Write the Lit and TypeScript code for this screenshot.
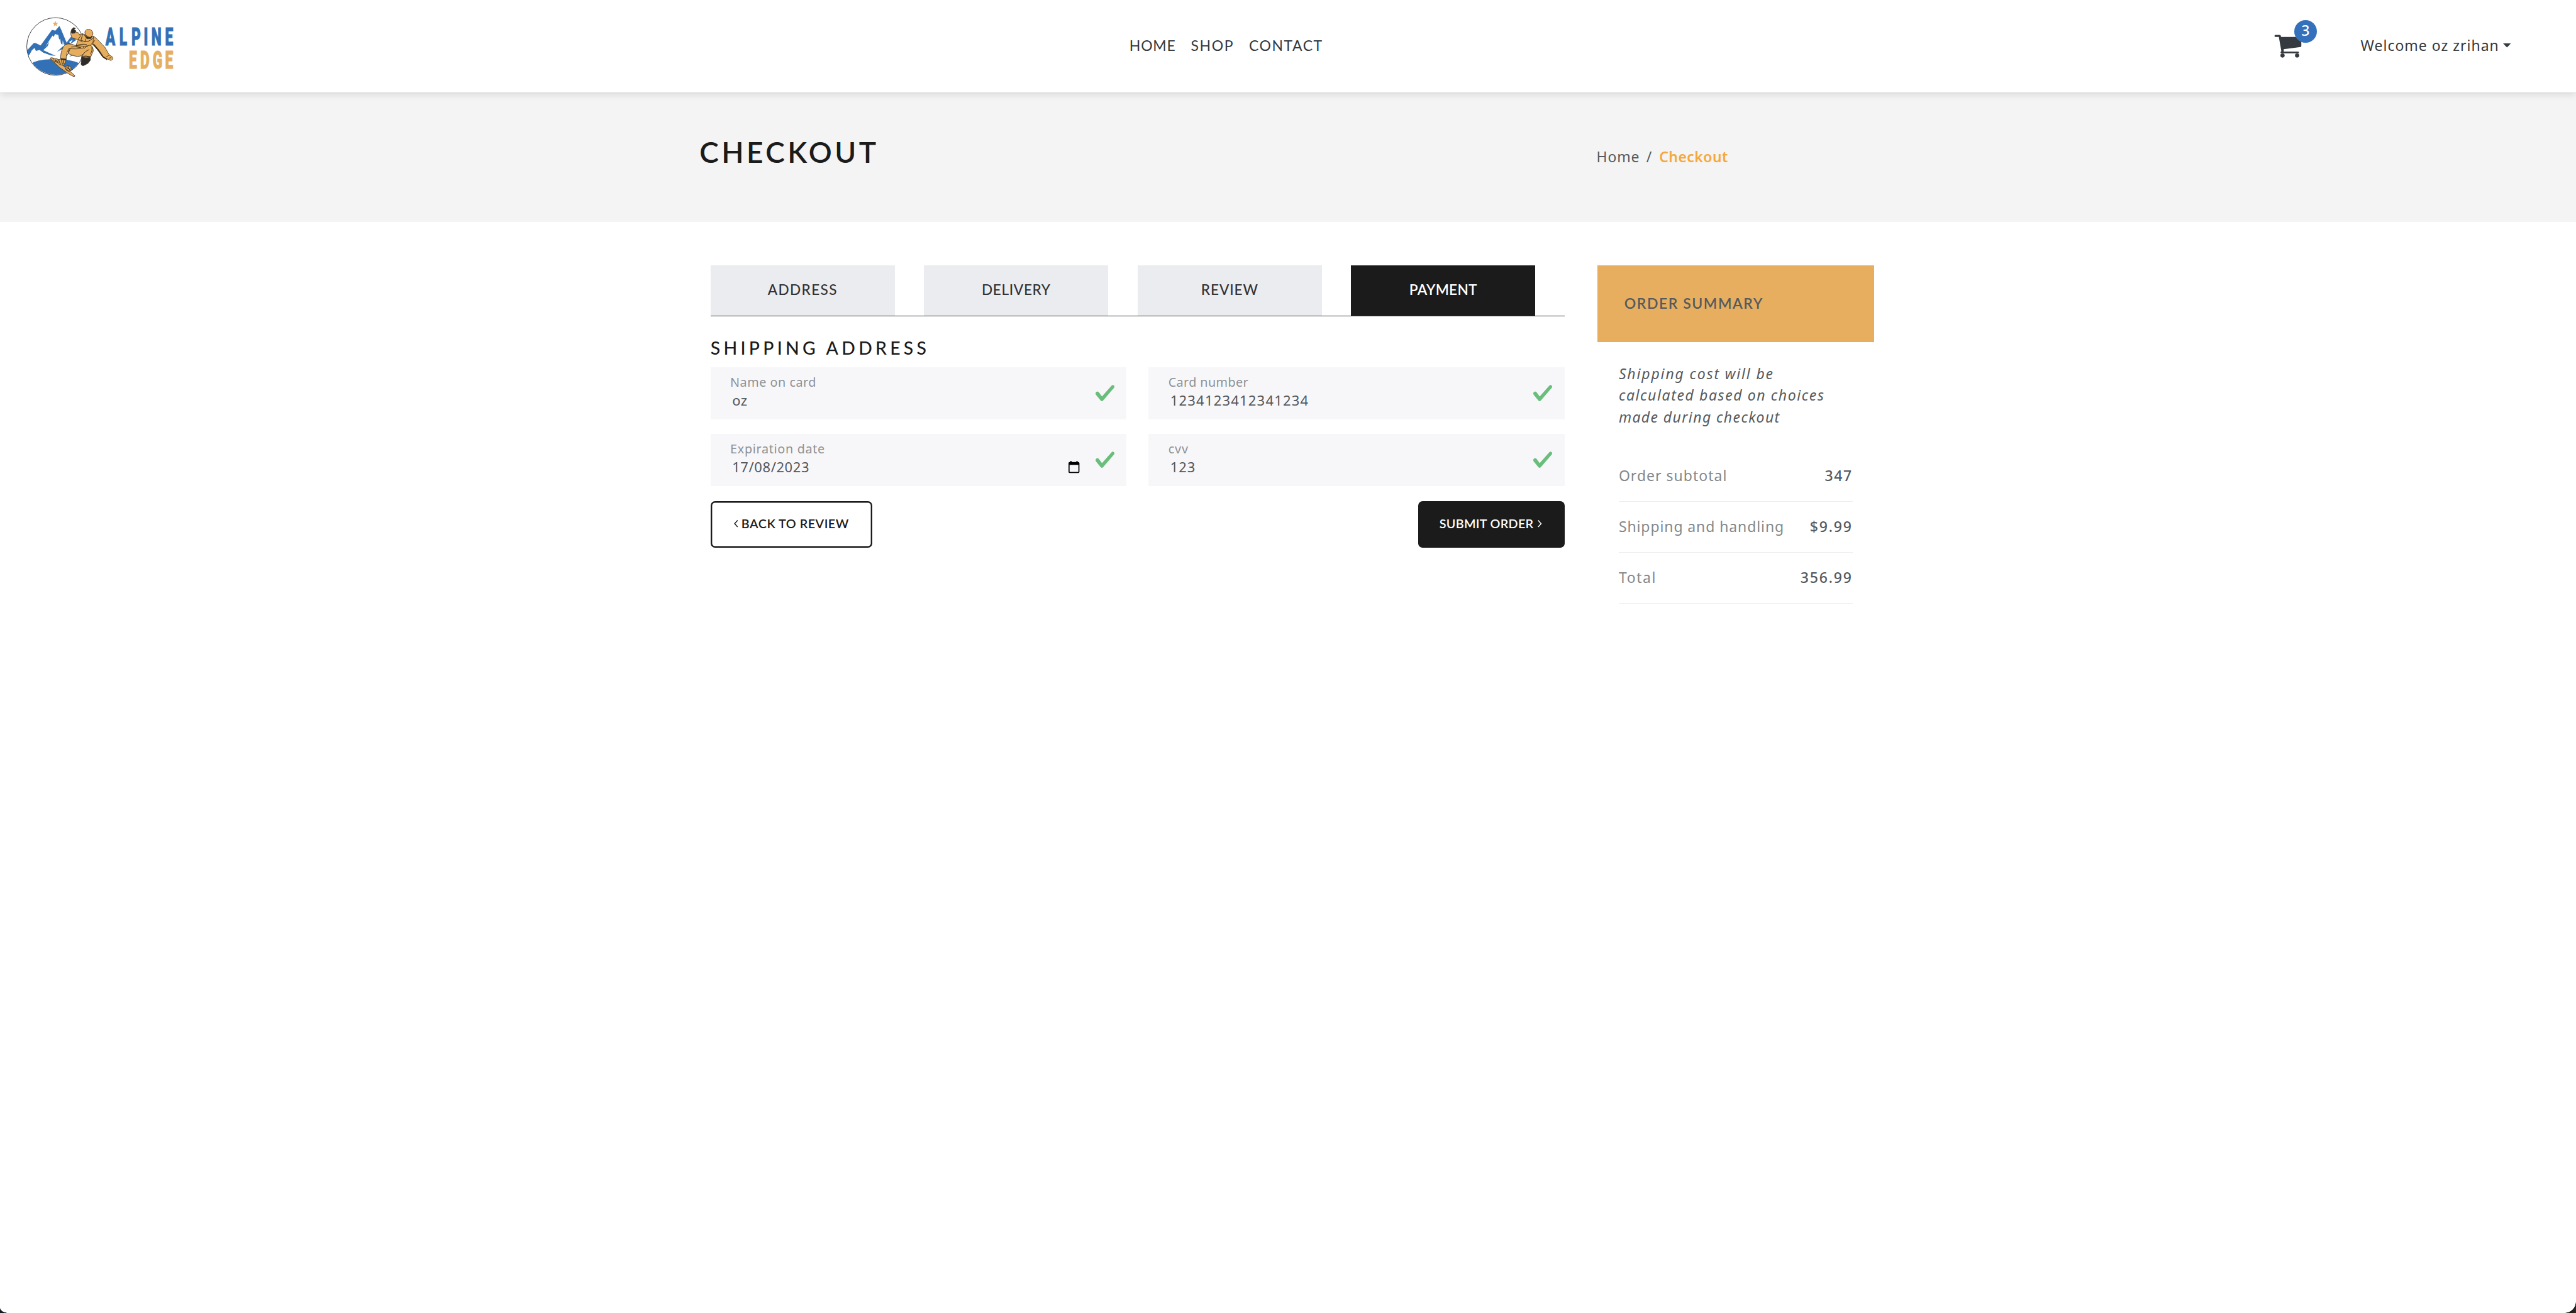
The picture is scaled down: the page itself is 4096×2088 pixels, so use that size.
import { LitElement, html, css } from "lit";
import { customElement, property } from "lit/decorators.js";

const base = css`
  * { box-sizing: border-box; }
  svg { display: block; flex: none; overflow: visible; }
`;

@customElement("brand-logo")
class BrandLogo extends LitElement {
  static styles = [base, css`
    :host { display: block; width: 237.5px; height: 100.1px; }
    .art { width: 237.5px; height: 100.1px; }
    .word { font-family: Roboto, "Liberation Sans Narrow", sans-serif; font-weight: 900; font-size: 147px; stroke-width: 4; }
    .blue { fill: #3371b7; stroke: #3371b7; }
    .gold { fill: #e6ae5f; stroke: #e6ae5f; }
  `];

  render() {
    return html`<svg class="art" viewBox="150 90 890 375">
      <g transform="translate(150 90)">
        <path fill="#3371b7" d="M43 285 C90 256 255 254 319 286 A171 171 0 0 1 43 285Z"/>
        <path fill="#3371b7" d="M12 210 L50 168 Q58 163 67 169 L92 181 L153 97 L159 88 L180 93 L204 65 L214 85 L247 164 L272 130 L290 128 L303 150 L262 178 L246 196 L240 176 L231 176 L224 150 L222 176 L214 170 L208 140 L203 146 L197 118 L188 116 L178 112 L170 130 L163 122 L120 188 L143 160 L135 184 L108 209 L140 224 L183 244 L152 240 L108 224 L86 208 L64 214 L56 196 L40 210 L27 234 L18 240 Z"/>
        <path fill="#3371b7" d="M190 218 L222 188 L252 176 L232 198 Z"/>
        <path fill="#fff" d="M262 160 L284 146 L270 170 Z"/>
        <path fill="#3f8795" d="M262 248 L286 230 L300 236 Z"/>
        <path fill="#e6ae5f" d="M180 34 L184.500 46 L197 46.500 L187 54.500 L190.500 67 L180 60 L169.500 67 L173 54.500 L163 46.500 L175.500 46 Z"/>
        <circle cx="181" cy="187" r="171.500" fill="none" stroke="#36373b" stroke-width="3.600"/>
        <g fill="#e5ad5d" stroke="#3a2d1c" stroke-width="3" stroke-linejoin="round" stroke-linecap="round">
          <path d="M149 256 Q156 251 167 256 L214 291 L256 326 L296 360 Q298 368 288 366 L262 352 L205 312 L162 271 Z"/>
          <path d="M166 259 L190 259 L200 271 L214 258 L245 264 L238 284 L228 301 L205 293 L192 282 L176 277 Z"/>
          <path d="M186 268 L196 283 M200 270 L210 290 M216 266 L222 293 M178 264 L184 277 M230 270 L226 290" stroke-width="4"/>
          <path d="M238 307 Q262 296 273 311 Q277 324 264 338 L246 329 Z"/>
          <path d="M248 312 L262 322 M256 306 L266 330 M240 318 L258 332" stroke-width="4"/>
          <path d="M215 255 L245 260 L242 269 L214 264 Z" fill="#2e2b29"/>
          <path d="M262 199 L350 182 C392 168 405 185 406 214 L392 246 L384 258 L338 252 L346 232 C330 252 300 250 259 230 C255 220 257 207 262 199Z"/>
          <path d="M304 184 C282 170 246 168 236 179 C221 192 211 228 211 258 L244 262 C245 238 250 214 262 199 C290 203 322 202 346 196 L352 180 Z"/>
          <path d="M303 180 L317 146 L310 120 L340 112 L405 128 L419 150 L412 174 L356 186 Z"/>
          <path d="M273 101 L300 100 L318 106 L330 126 L313 146 L284 137 C272 126 270 112 273 101Z"/>
          <path d="M274 99 L276 86 L289 74 L300 79 L290 84 L303 94 L296 107 L280 109 Z" fill="#2e2b29"/>
          <path d="M408 126 C428 138 455 172 474 190 L502 238 L520 249 C528 259 520 269 508 270 L492 261 L486 266 L462 250 C440 220 425 195 405 178 Z"/>
          <path d="M409 176 Q440 208 464 248 L486 262" fill="none" stroke-width="7"/>
          <path d="M484 248 L502 238 M500 256 L512 254" fill="none"/>
          <path d="M356 106 C354 90 368 84 380 85 C398 86 406 101 403 116 L396 130 L382 134 L362 120 Z"/>
          <path d="M353 118 Q368 134 390 133 L398 124 L392 140 L368 140 Z" fill="#2e2b29"/>
          <path d="M344 110 L332 150 L356 158 L362 142 M356 158 Q380 162 404 136 M318 146 L340 160 M304 182 Q340 168 366 176 M414 152 L396 172 M268 200 Q256 232 248 242 M276 190 Q300 186 332 194 M346 232 Q358 214 380 206 M350 200 Q356 190 372 186 M398 190 Q402 214 390 232 M336 246 Q362 240 388 248" fill="none" stroke-width="3.600"/>
          <path d="M337 250 L360 256 L388 252 L389 268 L374 288 L346 302 Q330 300 334 284 Z" fill="#2e2b29"/>
          <path d="M342 244 L364 250 L388 246" fill="none"/>
        </g>
      </g>
      <text class="word blue" transform="scale(.58 1)" y="270" x="1084 1227 1350 1477 1556 1697">ALPINE</text>
      <text class="word gold" transform="scale(.58 1)" y="408" x="1325 1441 1568 1697">EDGE</text>
    </svg>`;
  }
}

@customElement("site-header")
class SiteHeader extends LitElement {
  static styles = [base, css`
    :host { display: block; position: relative; z-index: 1; }
    .bar { display: flex; align-items: flex-start; height: 147px; padding: 0 104px 0 40px; background: #fff; color: #343a40; font-size: 23px; line-height: 28px; white-space: nowrap; box-shadow: 0 0 1px rgba(0,0,0,.2), 0 3px 12px rgba(0,0,0,.12); }
    brand-logo { margin-top: 24px; }
    .nav { display: grid; grid-template-columns: 97.6px 92.7px auto; margin: 58px 0 0 1518.3px; }
    .home { letter-spacing: .8px; }
    .shop { letter-spacing: 1.6px; }
    .contact { letter-spacing: 1.5px; }
    .right { display: flex; margin-left: auto; }
    .cart { position: relative; width: 137.400px; padding-top: 54.700px; }
    .icon { width: 43.800px; height: 36.800px; }
    .badge { position: absolute; left: 31.500px; top: 32px; width: 36px; height: 36px; border-radius: 50%; background: #3371bd; color: #fff; font-family: "Noto Sans", sans-serif; font-weight: 500; text-align: center; line-height: 33px; }
    .user { width: 225.900px; padding-top: 58px; font-family: "Noto Sans", sans-serif; letter-spacing: .99px; }
    .caret { width: 12.500px; height: 6.600px; margin-top: 69px; }
  `];

  render() {
    return html`<header class="bar">
      <brand-logo></brand-logo>
      <nav class="nav"><span class="home">HOME</span><span class="shop">SHOP</span><span class="contact">CONTACT</span></nav>
      <div class="right">
        <div class="cart">
          <svg class="icon" viewBox="50 115 164 138" fill="#343a40">
            <path d="M58 117 H84 Q89 117 90 123 L91 129 H212 V184 Q212 188 208 189 L107 202 V216 H192 Q198 216 198 221.500 T192 227 H94 Q88 227 88 221 Q88 216 93 214 L78 129 H58 Q52 129 52 123 T58 117Z"/>
            <circle cx="100" cy="240" r="12.500"/><circle cx="187" cy="240" r="12.500"/>
          </svg>
          <span class="badge">3</span>
        </div>
        <span class="user">Welcome oz zrihan</span>
        <svg class="caret" viewBox="0 0 12.500 6.600"><path fill="#343a40" d="M0 0H12.500L6.250 6.600Z"/></svg>
      </div>
    </header>`;
  }
}

@customElement("page-hero")
class PageHero extends LitElement {
  static styles = [base, css`
    :host { display: block; }
    .hero { display: grid; grid-template-columns: 1426.300px auto; height: 206px; padding: 66.600px 0 0 1112.300px; background: #f4f4f4; white-space: nowrap; }
    .title { margin: 0; font-size: 46px; line-height: 56px; font-weight: 600; letter-spacing: 4.42px; color: #1b1b1b; }
    .crumbs { display: grid; grid-template-columns: 79.200px 20.400px auto; align-content: start; padding-top: 21.300px; font-family: "Noto Sans", sans-serif; font-size: 23px; line-height: 28px; color: #555a5e; }
    .home { letter-spacing: .85px; }
    .here { color: #f5a83c; font-weight: 600; letter-spacing: .44px; }
  `];

  render() {
    return html`<section class="hero">
      <h1 class="title">CHECKOUT</h1>
      <div class="crumbs"><span class="home">Home</span><span>/</span><span class="here">Checkout</span></div>
    </section>`;
  }
}

@customElement("form-field")
class FormField extends LitElement {
  @property() label = "";
  @property() value = "";
  @property() kind = "name";

  static styles = [base, css`
    :host { display: block; }
    .field { display: flex; align-items: flex-start; height: 83.200px; padding: 0 18.800px 0 31.400px; background: #f7f7f9; white-space: nowrap; }
    .texts { flex: 1; padding-top: 11.600px; font-family: "Noto Sans", sans-serif; }
    .label { font-size: 19.800px; line-height: 24px; color: #8e9194; }
    .value { margin: 2.300px 0 0 3.100px; font-size: 22px; line-height: 28px; color: #55585b; }
    .name .label { letter-spacing: .51px; }
    .name .value { letter-spacing: .4px; }
    .number .label { letter-spacing: .4px; }
    .number .value { letter-spacing: 1.2px; }
    .date .label { letter-spacing: .67px; }
    .date .value { letter-spacing: .59px; }
    .code .label { letter-spacing: .88px; }
    .code .value { letter-spacing: .97px; }
    .calendar { width: 17.400px; height: 19.300px; margin: 42.500px 25.300px 0 0; }
    .check { width: 30.300px; height: 26px; margin-top: 27.800px; }
  `];

  render() {
    return html`<div class="field ${this.kind}">
      <div class="texts"><div class="label">${this.label}</div><div class="value">${this.value}</div></div>
      ${this.kind === "date" ? html`<svg class="calendar" viewBox="0 0 17.400 19.300"><path fill="#000" fill-rule="evenodd" d="M3 0H4.800V1.800H12.600V0H14.400V1.800H15.600Q17.400 1.800 17.400 3.600V17.500Q17.400 19.300 15.600 19.300H1.800Q0 19.300 0 17.500V3.600Q0 1.800 1.800 1.800H3ZM1.700 6.200V17.500H15.700V6.200Z"/></svg>` : ""}
      <svg class="check" viewBox="0 0 30.300 26"><path fill="#69be7b" d="M2.500 10.800C0 11.400 -.6 14 .8 16L8 24.700C9.500 26.400 11 26.400 12.400 24.600L29.600 4.600C31.200 2 28 -.9 25.700 .9L10.200 18.600L5.600 12.200C4.900 11 3.900 10.500 2.500 10.800Z"/></svg>
    </div>`;
  }
}

@customElement("checkout-form")
class CheckoutForm extends LitElement {
  static styles = [base, css`
    :host { display: block; width: 1358px; }
    .tabs { display: grid; grid-template-columns: repeat(4, 339.500px); border-bottom: 1px solid #333; }
    .tab { display: flex; align-items: center; justify-content: center; width: 293.300px; height: 80.700px; padding-bottom: 3px; background: #ebecf0; color: #333; font-size: 22.600px; font-weight: 500; }
    .tab.active { background: #1b1b1b; color: #fff; font-weight: 600; }
    .address { letter-spacing: 1.34px; }
    .delivery { letter-spacing: .67px; }
    .review { letter-spacing: .9px; }
    .payment { letter-spacing: .3px; }
    .heading { margin: 32.300px 0 14.200px; font-size: 28.400px; line-height: 34px; font-weight: 500; letter-spacing: 5.29px; color: #1b1b1b; white-space: nowrap; }
    .fields { display: grid; grid-template-columns: 661.300px 661.300px; gap: 23.100px 35.300px; }
    .actions { display: flex; justify-content: space-between; margin-top: 23.100px; }
    .btn { display: flex; align-items: center; height: 74.800px; border-radius: 7px; font-size: 19.800px; font-weight: 600; line-height: 24px; white-space: nowrap; color: #1b1b1b; }
    .btn span { padding-bottom: 4px; }
    .back { width: 257.800px; padding-left: 37.700px; gap: 4.900px; box-shadow: inset 0 0 0 2.400px #1b1b1b; letter-spacing: .5px; }
    .submit { width: 233px; padding-left: 34px; gap: 6.200px; background: #1b1b1b; color: #fff; letter-spacing: .3px; }
    .chev { width: 6.600px; height: 11.400px; margin-bottom: 1.500px; }
  `];

  render() {
    const tabs = ["ADDRESS", "DELIVERY", "REVIEW", "PAYMENT"];
    return html`
      <div class="tabs">${tabs.map(t => html`<div class="tab ${t.toLowerCase()} ${t === "PAYMENT" ? "active" : ""}">${t}</div>`)}</div>
      <h2 class="heading">SHIPPING ADDRESS</h2>
      <div class="fields">
        <form-field kind="name" label="Name on card" value="oz"></form-field>
        <form-field kind="number" label="Card number" value="1234123412341234"></form-field>
        <form-field kind="date" label="Expiration date" value="17/08/2023"></form-field>
        <form-field kind="code" label="cvv" value="123"></form-field>
      </div>
      <div class="actions">
        <div class="btn back"><svg class="chev" viewBox="0 0 6.600 11.400"><path fill="none" stroke="currentColor" stroke-width="1.500" d="M5.800 .5L1.200 5.700L5.800 10.900"/></svg><span>BACK TO REVIEW</span></div>
        <div class="btn submit"><span>SUBMIT ORDER</span><svg class="chev" viewBox="0 0 6.600 11.400"><path fill="none" stroke="currentColor" stroke-width="1.500" d="M.8 .5L5.400 5.700L.8 10.900"/></svg></div>
      </div>`;
  }
}

@customElement("order-summary")
class OrderSummary extends LitElement {
  static styles = [base, css`
    :host { display: block; width: 440.400px; font-size: 23px; line-height: 28px; color: #555a5e; white-space: nowrap; }
    .head { height: 122.500px; padding: 46px 0 0 43.200px; background: #e7ae60; font-weight: 600; letter-spacing: 1.54px; }
    .body { padding: 32.500px 34.300px 0 34.300px; font-family: "Noto Sans", sans-serif; }
    .note { margin: 0 0 36px; font-style: italic; line-height: 34.650px; }
    .note span { display: block; }
    .l1 { letter-spacing: 1.85px; }
    .l2 { letter-spacing: 1.6px; }
    .l3 { letter-spacing: 1.4px; }
    .row { display: flex; justify-content: space-between; height: 81.200px; padding-top: 25px; border-bottom: 1px solid #eee; }
    .key { color: #84888b; }
    .val { font-weight: 500; letter-spacing: 1.8px; }
    .r0 .key { letter-spacing: 1.01px; }
    .r1 .key { letter-spacing: .9px; }
    .r2 .key { letter-spacing: 1.6px; }
    .r0 .val { letter-spacing: 1.6px; }
  `];

  render() {
    const rows = [["Order subtotal", "347"], ["Shipping and handling", "$9.99"], ["Total", "356.99"]];
    return html`
      <div class="head">ORDER SUMMARY</div>
      <div class="body">
        <p class="note"><span class="l1">Shipping cost will be</span><span class="l2">calculated based on choices</span><span class="l3">made during checkout</span></p>
        ${rows.map(([k, v], i) => html`<div class="row r${i}"><span class="key">${k}</span><span class="val">${v}</span></div>`)}
      </div>`;
  }
}

@customElement("app-root")
class AppRoot extends LitElement {
  static styles = [base, css`
    :host { display: block; position: relative; width: 4096px; height: 2088px; overflow: hidden; background: #fff; font-family: Lato, "Open Sans", sans-serif; }
    .main { display: flex; gap: 51.900px; padding: 68.800px 0 0 1129.700px; }
    .corner { position: absolute; bottom: 0; }
    .left { left: 0; width: 14px; height: 8px; background: radial-gradient(ellipse 14px 8px at 100% 0, transparent 96%, #141a24 100%); }
    .right { right: 0; width: 18px; height: 18px; background: radial-gradient(circle 18px at 0 0, transparent 97%, #1c1c1f 100%, #23211f 110%, #4a2312 135%); }
  `];

  render() {
    return html`
      <site-header></site-header>
      <page-hero></page-hero>
      <main class="main"><checkout-form></checkout-form><order-summary></order-summary></main>
      <div class="corner left"></div><div class="corner right"></div>`;
  }
}
